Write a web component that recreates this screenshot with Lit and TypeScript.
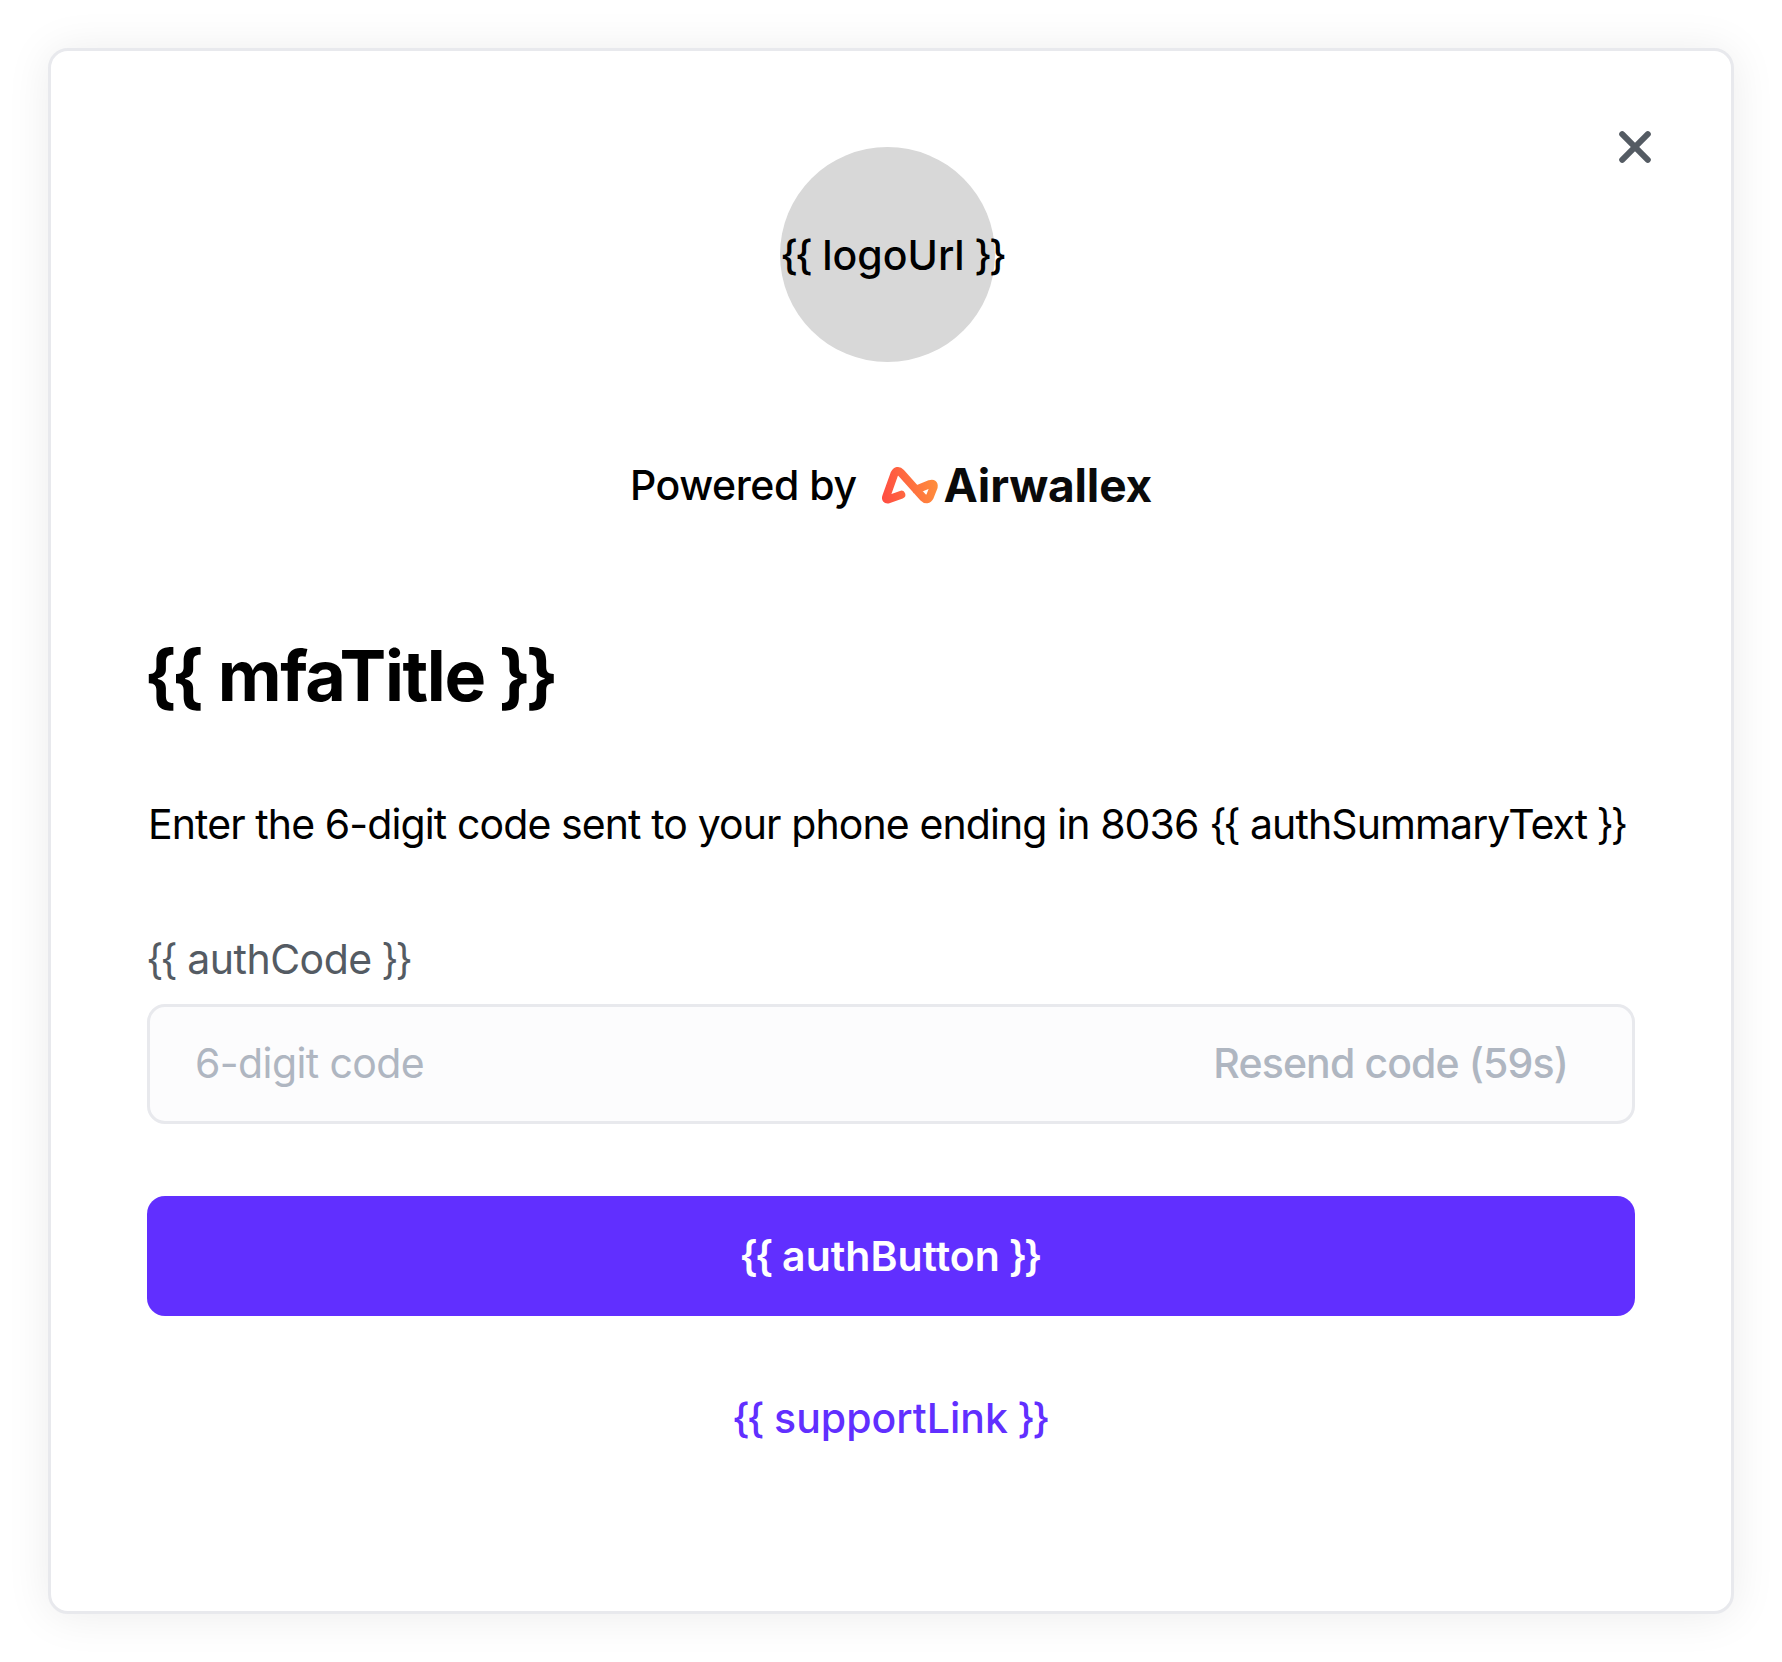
import { LitElement, html, css } from "lit";
import { customElement, property } from "lit/decorators.js";

@customElement("template-var")
class TemplateVar extends LitElement {
  static styles = css`
    :host { display: inline; white-space: nowrap; word-spacing: -1.5px; }
    .open, .close { letter-spacing: -0.08em; }
    .open { margin-right: 0.08em; }
    .close { margin-right: 0.08em; }
  `;
  @property() name = "";
  render() {
    return html`<span class="open">${"{{"}</span> ${this.name} <span class="close">${"}}"}</span>`;
  }
}

@customElement("airwallex-logo")
class AirwallexLogo extends LitElement {
  static styles = css`
    :host { display: flex; align-items: center; gap: 6px; }
    .mark { width: 56px; height: 36.7px; display: block; overflow: visible; }
    .word { font-size: 46px; font-weight: 700; line-height: 60px; color: #0a0a0a; letter-spacing: -0.15px; }
  `;
  render() {
    return html`
      <svg class="mark" viewBox="40 50 168 110" fill="none">
        <defs>
          <linearGradient id="flame" gradientUnits="userSpaceOnUse" x1="45" y1="120" x2="205" y2="95">
            <stop offset="0" stop-color="#ff4f42" />
            <stop offset="1" stop-color="#ff8e3c" />
          </linearGradient>
        </defs>
        <path
          d="M98 133 L60 147 Q49 149 53 138 L77 71 Q86 55 97 67 L163 141 Q176 154 184 138 L195 110 Q197 97 184 101 L142 118"
          stroke="url(#flame)" stroke-width="24" stroke-linecap="round" stroke-linejoin="round" />
      </svg>
      <span class="word">Airwallex</span>
    `;
  }
}

@customElement("app-root")
class AppRoot extends LitElement {
  static styles = css`
    :host {
      display: block;
      box-sizing: border-box;
      height: 1662px;
      padding: 48px;
      background: #fff;
      color: #000;
      font-family: Inter, "Liberation Sans", sans-serif;
      font-size: 41px;
      line-height: 60px;
    }
    .card {
      position: relative;
      box-sizing: border-box;
      width: 1686px;
      height: 1566px;
      padding: 96px;
      border: 3px solid #e8e9ed;
      border-radius: 20px;
      background: #fff;
      box-shadow: 0 2px 45px rgba(0, 0, 0, 0.08);
      display: flex;
      flex-direction: column;
    }
    .dismiss {
      position: absolute;
      top: 80px;
      right: 80px;
      width: 32px;
      height: 32px;
      padding: 0;
      border: 0;
      background: none;
    }
    .dismiss svg { display: block; }
    .logo {
      align-self: center;
      display: grid;
      width: 222px;
      height: 215px;
      align-items: center;
      font-weight: 500;
    }
    .disc, .logo-text { grid-area: 1 / 1; }
    .disc { width: 215px; height: 215px; border-radius: 50%; background: #d8d8d8; }
    .logo-text { justify-self: center; }
    .powered {
      display: flex;
      justify-content: center;
      align-items: center;
      gap: 25px;
      margin-top: 93px;
      font-weight: 500;
      letter-spacing: -0.45px;
    }
    .title {
      margin: 118.5px 0 0 -3px;
      font-size: 70px;
      line-height: 84px;
      font-weight: 700;
      letter-spacing: -1.4px;
    }
    .summary { margin: 76.5px 0 0 1px; white-space: nowrap; letter-spacing: -0.9px; }
    .label { margin: 75px 0 0 -1px; color: #545b63; letter-spacing: -0.5px; }
    .field {
      display: flex;
      align-items: center;
      box-sizing: border-box;
      height: 120px;
      margin-top: 15px;
      padding: 0 64px 3px 45px;
      border: 3px solid #e8e9ed;
      border-radius: 18px;
      background: #fcfcfd;
    }
    .code {
      flex: 1;
      min-width: 0;
      height: 60px;
      padding: 0;
      border: 0;
      outline: 0;
      background: none;
      font: inherit;
      letter-spacing: -0.6px;
    }
    .code::placeholder { color: #afb6c1; opacity: 1; }
    .resend { color: #afb6c1; font-weight: 500; letter-spacing: -0.87px; }
    .submit {
      height: 120px;
      margin-top: 72px;
      padding: 0;
      border: 0;
      border-radius: 18px;
      background: #612fff;
      color: #fff;
      font: inherit;
      font-weight: 600;
    }
    .support {
      align-self: center;
      margin-top: 72px;
      color: #612fff;
      font-weight: 500;
      text-decoration: none;
    }
  `;

  render() {
    return html`
      <main class="card">
        <button class="dismiss" aria-label="Close">
          <svg width="32" height="32" viewBox="0 0 32 32" stroke="#545b63" stroke-width="6" stroke-linecap="round">
            <path d="M3.2 3.2 L28.8 28.8 M28.8 3.2 L3.2 28.8" />
          </svg>
        </button>
        <div class="logo">
          <div class="disc"></div>
          <template-var class="logo-text" name="logoUrl"></template-var>
        </div>
        <div class="powered"><span>Powered by</span><airwallex-logo></airwallex-logo></div>
        <h1 class="title"><template-var name="mfaTitle"></template-var></h1>
        <div class="summary">Enter the 6-digit code sent to your phone ending in 8036 <template-var name="authSummaryText"></template-var></div>
        <div class="label"><template-var name="authCode"></template-var></div>
        <div class="field">
          <input class="code" placeholder="6-digit code" />
          <span class="resend">Resend code (59s)</span>
        </div>
        <button class="submit"><template-var name="authButton"></template-var></button>
        <a class="support"><template-var name="supportLink"></template-var></a>
      </main>
    `;
  }
}
